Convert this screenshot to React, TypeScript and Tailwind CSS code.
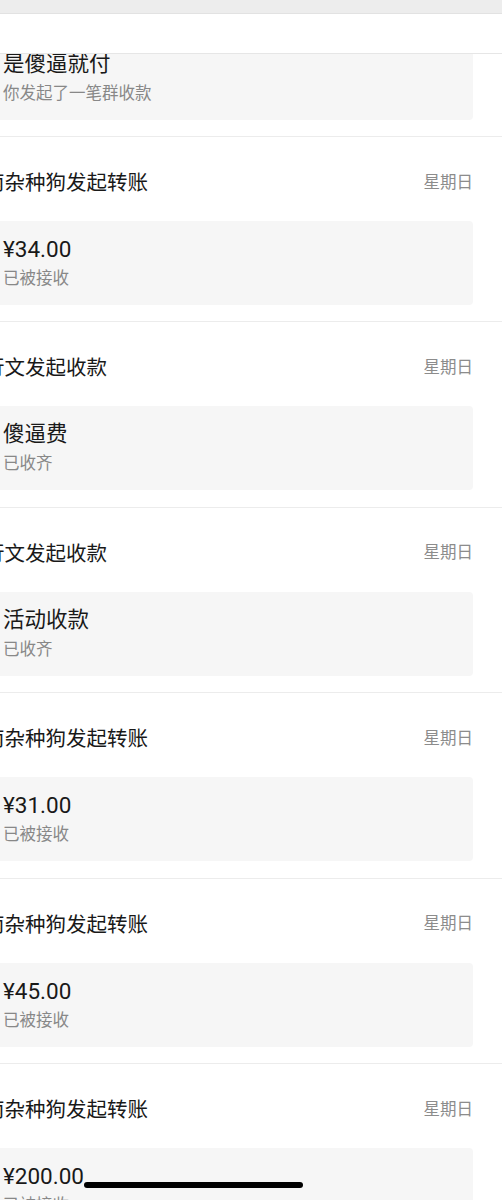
const sections = [
  { title: "南杂种狗发起转账", main: "是傻逼就付", sub: "你发起了一笔群收款" },
  { title: "南杂种狗发起转账", main: "¥34.00", sub: "已被接收" },
  { title: "行文发起收款", main: "傻逼费", sub: "已收齐" },
  { title: "行文发起收款", main: "活动收款", sub: "已收齐" },
  { title: "南杂种狗发起转账", main: "¥31.00", sub: "已被接收" },
  { title: "南杂种狗发起转账", main: "¥45.00", sub: "已被接收" },
  { title: "南杂种狗发起转账", main: "¥200.00", sub: "已被接收" },
];

function Record({ title, main, sub }: { title: string; main: string; sub: string }) {
  const isAmount = main.startsWith("¥");
  return (
    <div className="h-[185.4px] shrink-0 border-b border-[#ececec]">
      <div className="mr-[29px] mt-[32px] flex h-[28px] items-center justify-between">
        <span className="text-[20.5px] leading-[28px] text-[#191919]">{title}</span>
        <span className="text-[16.5px] text-[#8c8c8c]">星期日</span>
      </div>
      <div className="mr-[29px] mt-[24px] h-[84px] rounded-[4px] bg-[#f6f6f6] pl-[19px] pt-[14px]">
        <div
          className={
            isAmount
              ? "text-[22.5px] leading-[28px] text-[#191919]"
              : "text-[21.5px] leading-[28px] text-[#191919]"
          }
        >
          {main}
        </div>
        <div className="mt-[5px] text-[16.5px] leading-[22px] text-[#888888]">{sub}</div>
      </div>
    </div>
  );
}

export default function App() {
  return (
    <div
      className="relative h-[1200px] w-[502px] overflow-hidden bg-white"
      style={{ fontFamily: '"Roboto", "Noto Sans CJK SC", sans-serif' }}
    >
      <div className="-ml-[16px] -mt-[48.4px] flex flex-col">
        {sections.map((s, i) => (
          <Record key={i} {...s} />
        ))}
      </div>

      <div className="absolute left-0 right-0 top-0">
        <div className="h-[14px] border-b border-[#e2e2e2] bg-[#ededed]" />
        <div className="h-[40px] border-b border-[#e6e6e6] bg-white" />
      </div>

      <div className="absolute left-[84px] top-[1182px] h-[6px] w-[219px] rounded-full bg-black" />
    </div>
  );
}
